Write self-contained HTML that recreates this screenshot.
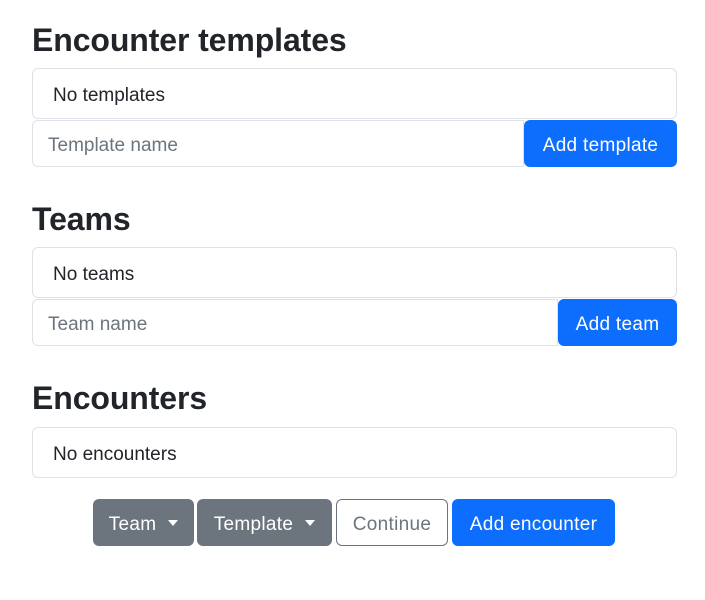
<!DOCTYPE html>
<html><head><meta charset="utf-8"><style>
*{box-sizing:border-box;margin:0;padding:0}
body{width:705px;height:600px;background:#fff;font-family:"Liberation Sans",sans-serif;color:#212529;position:relative;overflow:hidden}
h2{position:absolute;left:32px;font-size:32px;font-weight:bold;line-height:38px;letter-spacing:-0.1px}
.li{position:absolute;left:32px;width:645px;height:51px;border:1px solid #dee2e6;border-radius:6px;padding:2px 20px 0;font-size:19px;line-height:49px}
.ig{position:absolute;left:32px;width:645px;height:47px;display:flex}
.ig .in{flex:1;border:1px solid #dee2e6;border-radius:6px 0 0 6px;padding:2px 15px 0;font-size:19px;line-height:45px;color:#6c757d}
.btn{height:47px;border-radius:6px;font-size:19px;line-height:47px;padding-top:2px;text-align:center;color:#fff;background:#0d6efd;white-space:nowrap;letter-spacing:0.3px}
.ig .btn{border-radius:6px}
.row{position:absolute;top:499px;left:93px;display:flex;gap:3px}
.sec{background:#6c757d}
.caret{display:inline-block;width:0;height:0;border-left:5px solid transparent;border-right:5px solid transparent;border-top:6px solid #fff;vertical-align:middle;margin-left:12px;position:relative;top:-2px}
.out{background:#fff;color:#6c757d;border:1px solid #6c757d;line-height:45px}
</style></head><body>
<h2 style="top:21px">Encounter templates</h2>
<div class="li" style="top:68px">No templates</div>
<div class="ig" style="top:120px"><div class="in">Template name</div><div class="btn" style="width:153px">Add template</div></div>
<h2 style="top:200px">Teams</h2>
<div class="li" style="top:247px">No teams</div>
<div class="ig" style="top:299px"><div class="in">Team name</div><div class="btn" style="width:119px">Add team</div></div>
<h2 style="top:379px">Encounters</h2>
<div class="li" style="top:427px">No encounters</div>
<div class="row">
<div class="btn sec" style="width:101px">Team<span class="caret"></span></div>
<div class="btn sec" style="width:135px">Template<span class="caret"></span></div>
<div class="btn out" style="width:112px;margin-left:1px">Continue</div>
<div class="btn" style="width:163px;margin-left:1px">Add encounter</div>
</div>
</body></html>
